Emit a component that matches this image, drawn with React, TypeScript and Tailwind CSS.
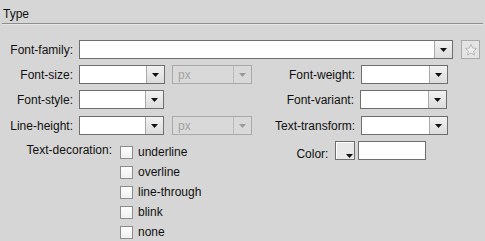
const font = { fontFamily: '"Liberation Sans", Arial, sans-serif' };

function Arrow({ disabled }: { disabled?: boolean }) {
  return (
    <svg width="7" height="4" viewBox="0 0 7 4">
      <path d="M0 0h7L3.5 4z" fill={disabled ? "#9a9a9a" : "#111"} />
    </svg>
  );
}

function Select({ w, disabled, value }: { w: string; disabled?: boolean; value?: string }) {
  return (
    <div
      className={`flex h-[19px] ${w} border ${
        disabled ? "border-[#a9a9a9] bg-[#d9d9d9]" : "border-[#6e6e6e] bg-white"
      }`}
    >
      <div className="flex-1 flex items-center pl-[5px] text-[12px] text-[#a3a3a3]">{value}</div>
      <div
        className={`w-[18px] flex items-center justify-center border-l ${
          disabled ? "border-[#b9b9b9] bg-[#d9d9d9]" : "border-[#a9a9a9] bg-gradient-to-b from-[#f2f2f2] to-[#dcdcdc]"
        }`}
      >
        <Arrow disabled={disabled} />
      </div>
    </div>
  );
}

function Check({ label }: { label: string }) {
  return (
    <div className="flex items-center gap-[5px] h-[20px]">
      <div className="w-[13px] h-[13px] border border-[#8c8c8c] bg-gradient-to-b from-[#fdfdfd] to-[#f0f0f0]" />
      <span className="text-[12px] text-[#111]">{label}</span>
    </div>
  );
}

export default function App() {
  return (
    <div className="w-[485px] h-[241px] bg-[#d6d6d6] overflow-hidden text-[#111]" style={font}>
      <div className="px-[3px] pt-[5px] h-[23px] text-[12px]">Type</div>
      <div className="mx-[2px] h-[2px] border-t border-[#8e8e8e] border-b-[#e6e6e6] border-b" />

      <div className="flex items-center mt-[15px] h-[19px]">
        <div className="w-[73px] text-right text-[12px]">Font-family:</div>
        <div className="ml-[6px]">
          <Select w="w-[374px]" />
        </div>
        <div className="ml-[8px] w-[19px] h-[19px] border border-[#a9a9a9] bg-[#e4e4e4] flex items-center justify-center">
          <svg width="14" height="14" viewBox="0 0 24 24">
            <path
              d="M12 2.5l2.9 6.2 6.6.7-5 4.5 1.4 6.6L12 17.1l-5.9 3.4 1.4-6.6-5-4.5 6.6-.7z"
              fill="#eeeeee"
              stroke="#a8a8a8"
              strokeWidth="1.3"
            />
          </svg>
        </div>
      </div>

      <div className="flex items-center mt-[6px] h-[19px]">
        <div className="w-[73px] text-right text-[12px]">Font-size:</div>
        <div className="ml-[6px]"><Select w="w-[86px]" /></div>
        <div className="ml-[7px]"><Select w="w-[80px]" disabled value="px" /></div>
        <div className="w-[103px] text-right text-[12px]">Font-weight:</div>
        <div className="ml-[6px]"><Select w="w-[87px]" /></div>
      </div>

      <div className="flex items-center mt-[6px] h-[19px]">
        <div className="w-[73px] text-right text-[12px]">Font-style:</div>
        <div className="ml-[6px]"><Select w="w-[85px]" /></div>
        <div className="w-[190px] text-right text-[12px]">Font-variant:</div>
        <div className="ml-[6px]"><Select w="w-[87px]" /></div>
      </div>

      <div className="flex items-center mt-[7px] h-[19px]">
        <div className="w-[73px] text-right text-[12px]">Line-height:</div>
        <div className="ml-[6px]"><Select w="w-[85px]" /></div>
        <div className="ml-[8px]"><Select w="w-[80px]" disabled value="px" /></div>
        <div className="w-[103px] text-right text-[12px]">Text-transform:</div>
        <div className="ml-[6px]"><Select w="w-[87px]" /></div>
      </div>

      <div className="flex mt-[6px]">
        <div className="w-[112px] text-right text-[12px]">Text-decoration:</div>
        <div className="ml-[8px] mt-[1px] flex flex-col">
          <Check label="underline" />
          <Check label="overline" />
          <Check label="line-through" />
          <Check label="blink" />
          <Check label="none" />
        </div>
        <div className="ml-[95px] flex items-start gap-[7px]">
          <span className="text-[12px] mt-[4px]">Color:</span>
          <div className="flex gap-[3px]">
            <div className="relative w-[20px] h-[19px] border border-[#6e6e6e] bg-[#e8e8e8] shadow-[inset_1px_1px_0_#fff]">
              <div className="absolute right-[1px] bottom-[1px]">
                <Arrow />
              </div>
            </div>
            <div className="w-[68px] h-[19px] border border-[#6e6e6e] bg-white" />
          </div>
        </div>
      </div>
    </div>
  );
}
